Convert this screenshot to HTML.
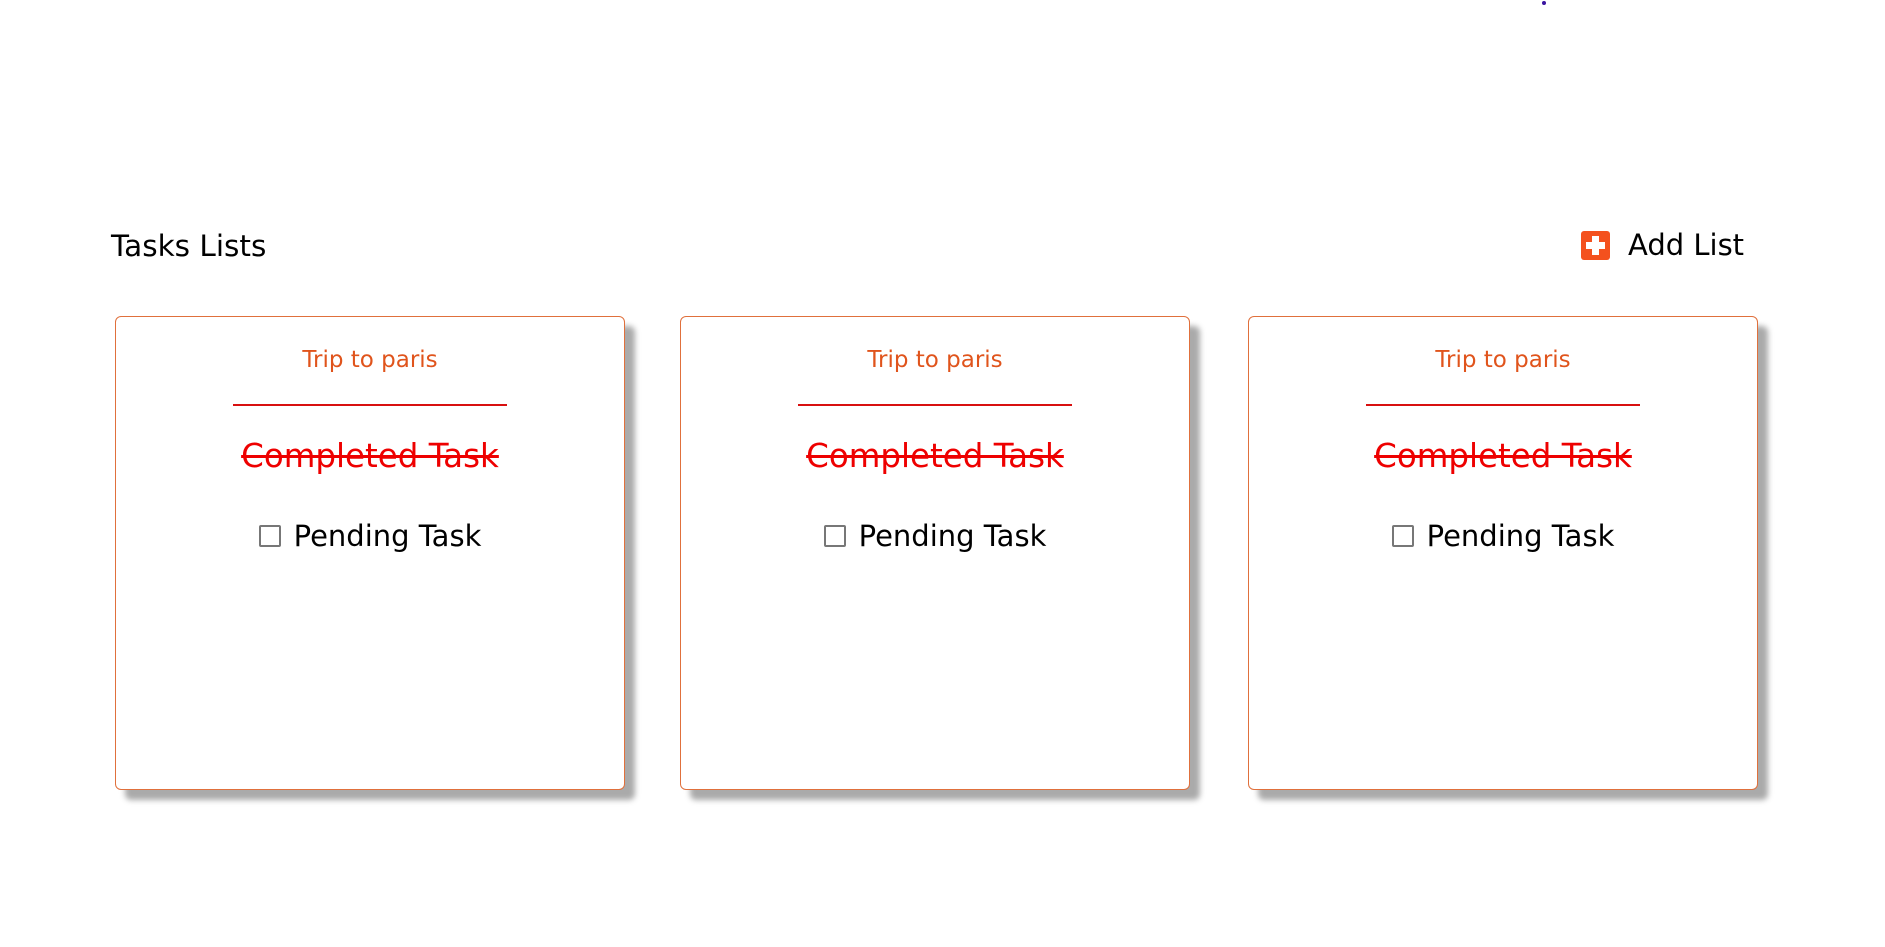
<!DOCTYPE html>
<html><head><style>
body{margin:0;width:1885px;height:947px;background:#fff;font-family:"DejaVu Sans",Verdana,sans-serif;position:relative;overflow:hidden}
.h{position:absolute;left:111px;top:229px;font-size:29.5px;color:#000}
.add{position:absolute;left:1581px;top:230px;height:30px;display:flex;align-items:center;font-size:29px}
.ic{width:29px;height:29px;background:#f4511e;border-radius:3px;position:relative;margin-right:18px}
.ic:before{content:"";position:absolute;left:11px;top:5px;width:7px;height:19px;background:#fff}
.ic:after{content:"";position:absolute;left:5px;top:11px;width:19px;height:7px;background:#fff}
.card{position:absolute;top:316px;width:510px;height:474px;border:1px solid #e0703c;border-radius:6px;box-sizing:border-box;box-shadow:10px 10px 6px #aaa;background:#fff;text-align:center}
.t{position:absolute;top:30px;left:0;right:0;font-size:23px;color:#e0541c}
.line{position:absolute;top:87px;left:117px;width:274px;height:2px;background:#d81010}
.c{position:absolute;top:120px;left:0;right:0;font-size:32.5px;color:#e00;text-decoration:line-through}
.p{position:absolute;top:202px;left:0;right:0;font-size:29px;color:#000;display:flex;justify-content:center;align-items:center}
.cb{width:22px;height:22px;border:2px solid #777;border-radius:2px;box-sizing:border-box;margin-right:13px}
.dot{position:absolute;left:1542px;top:1px;width:4px;height:4px;border-radius:50%;background:#3a14a0}
</style></head><body>
<div class="dot"></div>
<div class="h">Tasks Lists</div>
<div class="add"><div class="ic"></div>Add List</div>
<div class="card" style="left:115px"><div class="t">Trip to paris</div><div class="line"></div><div class="c">Completed Task</div><div class="p"><div class="cb"></div>Pending Task</div></div>
<div class="card" style="left:680px"><div class="t">Trip to paris</div><div class="line"></div><div class="c">Completed Task</div><div class="p"><div class="cb"></div>Pending Task</div></div>
<div class="card" style="left:1248px"><div class="t">Trip to paris</div><div class="line"></div><div class="c">Completed Task</div><div class="p"><div class="cb"></div>Pending Task</div></div>
</body></html>
